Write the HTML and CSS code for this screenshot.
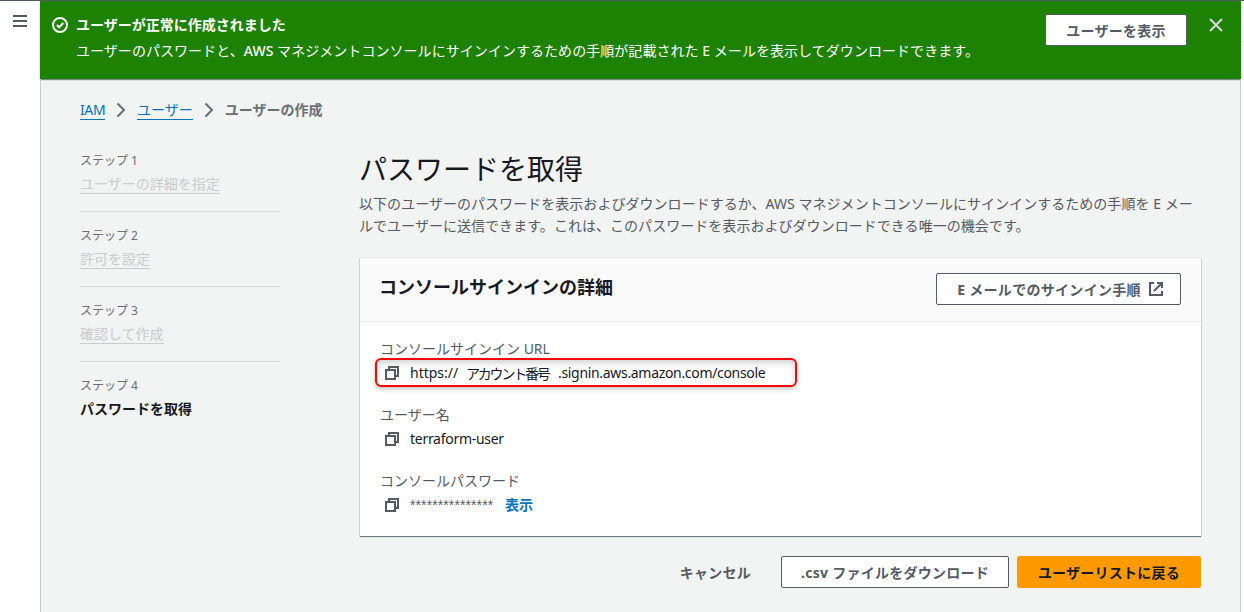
FILE: index.html
```html
<!DOCTYPE html>
<html lang="ja">

<head>
    <meta charset="UTF-8">
    <meta name="viewport" content="width=device-width, initial-scale=1.0">
    <title>ユーザーの作成 | IAM</title>
    <link rel="stylesheet" href="styles.css">
</head>

<body>
    <div class="app">
        <aside class="nav-toggle">
            <svg width="14" height="12" viewBox="0 0 14 12" stroke="#545b64" stroke-width="2">
                <path d="M0 1h14M0 6h14M0 11h14" />
            </svg>
        </aside>

        <div class="content">
            <!-- Success flashbar -->
            <div class="flash">
                <svg class="flash-icon" width="16" height="16" viewBox="0 0 16 16" fill="none" stroke="#fff" stroke-width="2">
                    <circle cx="8" cy="8" r="7" />
                    <path d="M4.8 8l2.3 2.3 4.2-4.3" />
                </svg>
                <div class="flash-text">
                    <div class="flash-title">ユーザーが正常に作成されました</div>
                    <div class="flash-message">ユーザーのパスワードと、<span class="latin">AWS</span> マネジメントコンソールにサインインするための手順が記載された E メールを表示してダウンロードできます。</div>
                </div>
                <button class="btn btn-flash">ユーザーを表示</button>
                <svg class="flash-close" width="14" height="14" viewBox="0 0 14 14" fill="none" stroke="#d5dbdb" stroke-width="2">
                    <path d="M1 1l12 12M13 1L1 13" />
                </svg>
            </div>

            <div class="page">
                <nav class="breadcrumb">
                    <a class="crumb crumb-root">IAM</a>
                    <svg class="chevron" width="10" height="16" viewBox="0 0 10 16"><path d="M1.5 1.5L8 8l-6.5 6.5" /></svg>
                    <a class="crumb">ユーザー</a>
                    <svg class="chevron" width="10" height="16" viewBox="0 0 10 16"><path d="M1.5 1.5L8 8l-6.5 6.5" /></svg>
                    <span class="crumb-current">ユーザーの作成</span>
                </nav>

                <div class="wizard">
                    <div class="steps">
                        <div class="step">
                            <div class="step-label">ステップ 1</div>
                            <a class="step-link">ユーザーの詳細を指定</a>
                        </div>
                        <div class="step">
                            <div class="step-label">ステップ 2</div>
                            <a class="step-link">許可を設定</a>
                        </div>
                        <div class="step">
                            <div class="step-label">ステップ 3</div>
                            <a class="step-link">確認して作成</a>
                        </div>
                        <div class="step">
                            <div class="step-label">ステップ 4</div>
                            <div class="step-current">パスワードを取得</div>
                        </div>
                    </div>

                    <main class="main">
                        <h1>パスワードを取得</h1>
                        <p class="description">以下のユーザーのパスワードを表示およびダウンロードするか、AWS マネジメントコンソールにサインインするための手順を E メー<br>ルでユーザーに送信できます。これは、このパスワードを表示およびダウンロードできる唯一の機会です。</p>

                        <section class="panel">
                            <div class="panel-header">
                                <h2>コンソールサインインの詳細</h2>
                                <button class="btn btn-email">E メールでのサインイン手順
                                    <svg width="14" height="14" viewBox="0 0 14 14" fill="none" stroke="#545b64" stroke-width="2">
                                        <path d="M5 1H1v12h12V9M8 1h5v5M13 1L5 9" />
                                    </svg>
                                </button>
                            </div>
                            <div class="panel-body">
                                <div class="field">
                                    <div class="field-label">コンソールサインイン URL</div>
                                    <div class="field-value highlight">
                                        <svg class="copy" width="14" height="14" viewBox="0 0 14 14"><path d="M1 4h9v9H1zM4 4V1h9v9h-3" /></svg>
                                        <span class="url-start">https://</span>
                                        <span class="account">アカウント番号</span>
                                        <span class="url-end">.signin.aws.amazon.com/console</span>
                                    </div>
                                </div>
                                <div class="field">
                                    <div class="field-label">ユーザー名</div>
                                    <div class="field-value">
                                        <svg class="copy" width="14" height="14" viewBox="0 0 14 14"><path d="M1 4h9v9H1zM4 4V1h9v9h-3" /></svg>
                                        <span class="username">terraform-user</span>
                                    </div>
                                </div>
                                <div class="field">
                                    <div class="field-label">コンソールパスワード</div>
                                    <div class="field-value">
                                        <svg class="copy" width="14" height="14" viewBox="0 0 14 14"><path d="M1 4h9v9H1zM4 4V1h9v9h-3" /></svg>
                                        <span class="password">***************</span>
                                        <a class="show">表示</a>
                                    </div>
                                </div>
                            </div>
                        </section>

                        <div class="actions">
                            <button class="btn btn-link">キャンセル</button>
                            <button class="btn btn-csv">.csv ファイルをダウンロード</button>
                            <button class="btn btn-primary">ユーザーリストに戻る</button>
                        </div>
                    </main>
                </div>
            </div>
        </div>

        <div class="right-rail"></div>
    </div>
</body>

</html>
```
FILE: styles.css
```css
* {
    margin: 0;
    padding: 0;
    box-sizing: border-box;
}

body {
    height: 612px;
    overflow: hidden;
    background: #fff;
    color: #16191f;
    font-family: "Noto Sans", "Noto Sans CJK JP", sans-serif;
    font-size: 14px;
    line-height: 22px;
    white-space: nowrap;
}

.app {
    display: flex;
    height: 612px;
    border-top: 1px solid #545b64;
}

/* Side rails */
.nav-toggle {
    width: 40px;
    padding: 14px 0 0 13px;
}

.nav-toggle svg {
    display: block;
}

.content {
    width: 1201px;
    background: #f2f3f3;
}

.right-rail {
    width: 3px;
    height: 41px;
    border-bottom: 1px solid #d5dbdb;
}

/* Flashbar */
.flash {
    display: flex;
    align-items: flex-start;
    height: 78px;
    padding: 13px 18px 0 12px;
    background: #1d8102;
    color: #fff;
    box-shadow: 0 1px 1px rgba(0, 28, 36, 0.5);
}

.flash-icon {
    margin: 3px 8px 0 0;
}

.flash-text {
    flex: 1;
    line-height: 26px;
    margin-top: -2px;
}

.flash-title {
    font-weight: 700;
}

.flash-message {
    letter-spacing: 0.05px;
}

.latin {
    font-weight: 500;
}

.flash-close {
    margin: 4px 0 0 22px;
}

/* Buttons */
.btn {
    display: flex;
    align-items: center;
    justify-content: center;
    height: 32px;
    background: #fff;
    border: 1px solid #545b64;
    border-radius: 2px;
    color: #545b64;
    font-family: inherit;
    font-size: 14px;
    font-weight: 700;
    letter-spacing: 0.25px;
    white-space: nowrap;
}

.btn-flash {
    width: 142px;
}

.btn-email {
    width: 245px;
    gap: 8px;
    margin-top: -2px;
    padding-left: 3px;
    letter-spacing: 0.3px;
}

.btn-link {
    padding: 0 30px 0 0;
    background: none;
    border: none;
}

.btn-csv {
    width: 228px;
    margin-right: 8px;
}

.btn-primary {
    width: 184px;
    background: #ff9900;
    border-color: #ff9900;
    color: #16191f;
}

/* Page area */
.page {
    height: 533px;
    padding: 20px 39px 0;
    border-left: 1px solid #c6cbcb;
    border-right: 1px solid #c6cbcb;
}

.breadcrumb {
    display: flex;
    align-items: center;
    height: 22px;
}

.crumb {
    height: 20px;
    line-height: 20px;
    border-bottom: 1px solid #0073bb;
    color: #0073bb;
}

.crumb-root {
    width: 25px;
    letter-spacing: -0.4px;
}

.chevron {
    margin: 0 11px;
    fill: none;
    stroke: #687078;
    stroke-width: 2;
}

.crumb-current {
    color: #687078;
    font-weight: 700;
}

.wizard {
    display: flex;
}

/* Steps */
.steps {
    width: 200px;
    margin-right: 79px;
    padding-top: 28px;
}

.step {
    height: 75px;
}

.step:not(:last-child)::after {
    content: "";
    display: block;
    margin-top: 17px;
    border-top: 1px solid #d5dbdb;
}

.step-label {
    height: 22px;
    color: #687078;
    font-size: 12px;
    line-height: 24px;
}

.step-link {
    display: block;
    width: fit-content;
    height: 22px;
    margin-top: 1px;
    border-bottom: 1px solid #c8cccc;
    color: #c8cccc;
    line-height: 24px;
}

.step-current {
    margin-top: 2px;
    font-weight: 700;
}

.main {
    width: 842px;
    padding-top: 30px;
}

h1 {
    font-size: 28px;
    font-weight: 400;
    line-height: 36px;
}

.description {
    margin-top: 6px;
    color: #545b64;
    letter-spacing: 0.04px;
}

/* Details panel */
.panel {
    height: 278px;
    margin: 21px 0 0 1px;
    background: #fff;
    box-shadow: 0 1px 1px 0 rgba(0, 28, 36, 0.5), 0 0 1px 0 rgba(0, 28, 36, 0.4);
}

.panel-header {
    display: flex;
    align-items: center;
    justify-content: space-between;
    height: 64px;
    padding: 0 20px 0 19px;
    background: #fafafa;
    border-bottom: 1px solid #eaeded;
}

h2 {
    margin-top: -6px;
    font-size: 18px;
    font-weight: 700;
    line-height: 22px;
}

.panel-body {
    padding: 16px 20px 0;
}

.field {
    height: 66px;
}

.field-label {
    height: 24px;
    color: #545b64;
}

.field-value {
    display: flex;
    align-items: center;
    height: 22px;
    padding-left: 5px;
}

.copy {
    margin-right: 11px;
    fill: none;
    stroke: #545b64;
    stroke-width: 2;
}

/* Red frame around the sign-in URL */
.highlight {
    width: 422px;
    height: 29px;
    margin: -4px 0 0 -5px;
    padding-left: 8px;
    border: 2px solid #f50808;
    border-radius: 6px;
    box-shadow: 0 2px 5px rgba(0, 0, 0, 0.25), inset 0 3px 6px rgba(0, 0, 0, 0.18);
}

.url-start {
    width: 56px;
}

.account {
    width: 92px;
    font-family: "Noto Sans CJK JP", sans-serif;
    letter-spacing: -2.2px;
}

.url-end {
    letter-spacing: -0.32px;
}

.username {
    letter-spacing: -0.28px;
}

.password {
    width: 83px;
    color: #545b64;
    font-family: "Liberation Sans", sans-serif;
    letter-spacing: 0.1px;
}

.show {
    margin-left: 12px;
    color: #0073bb;
    font-weight: 700;
}

.actions {
    display: flex;
    justify-content: flex-end;
    margin-top: 20px;
}
```
